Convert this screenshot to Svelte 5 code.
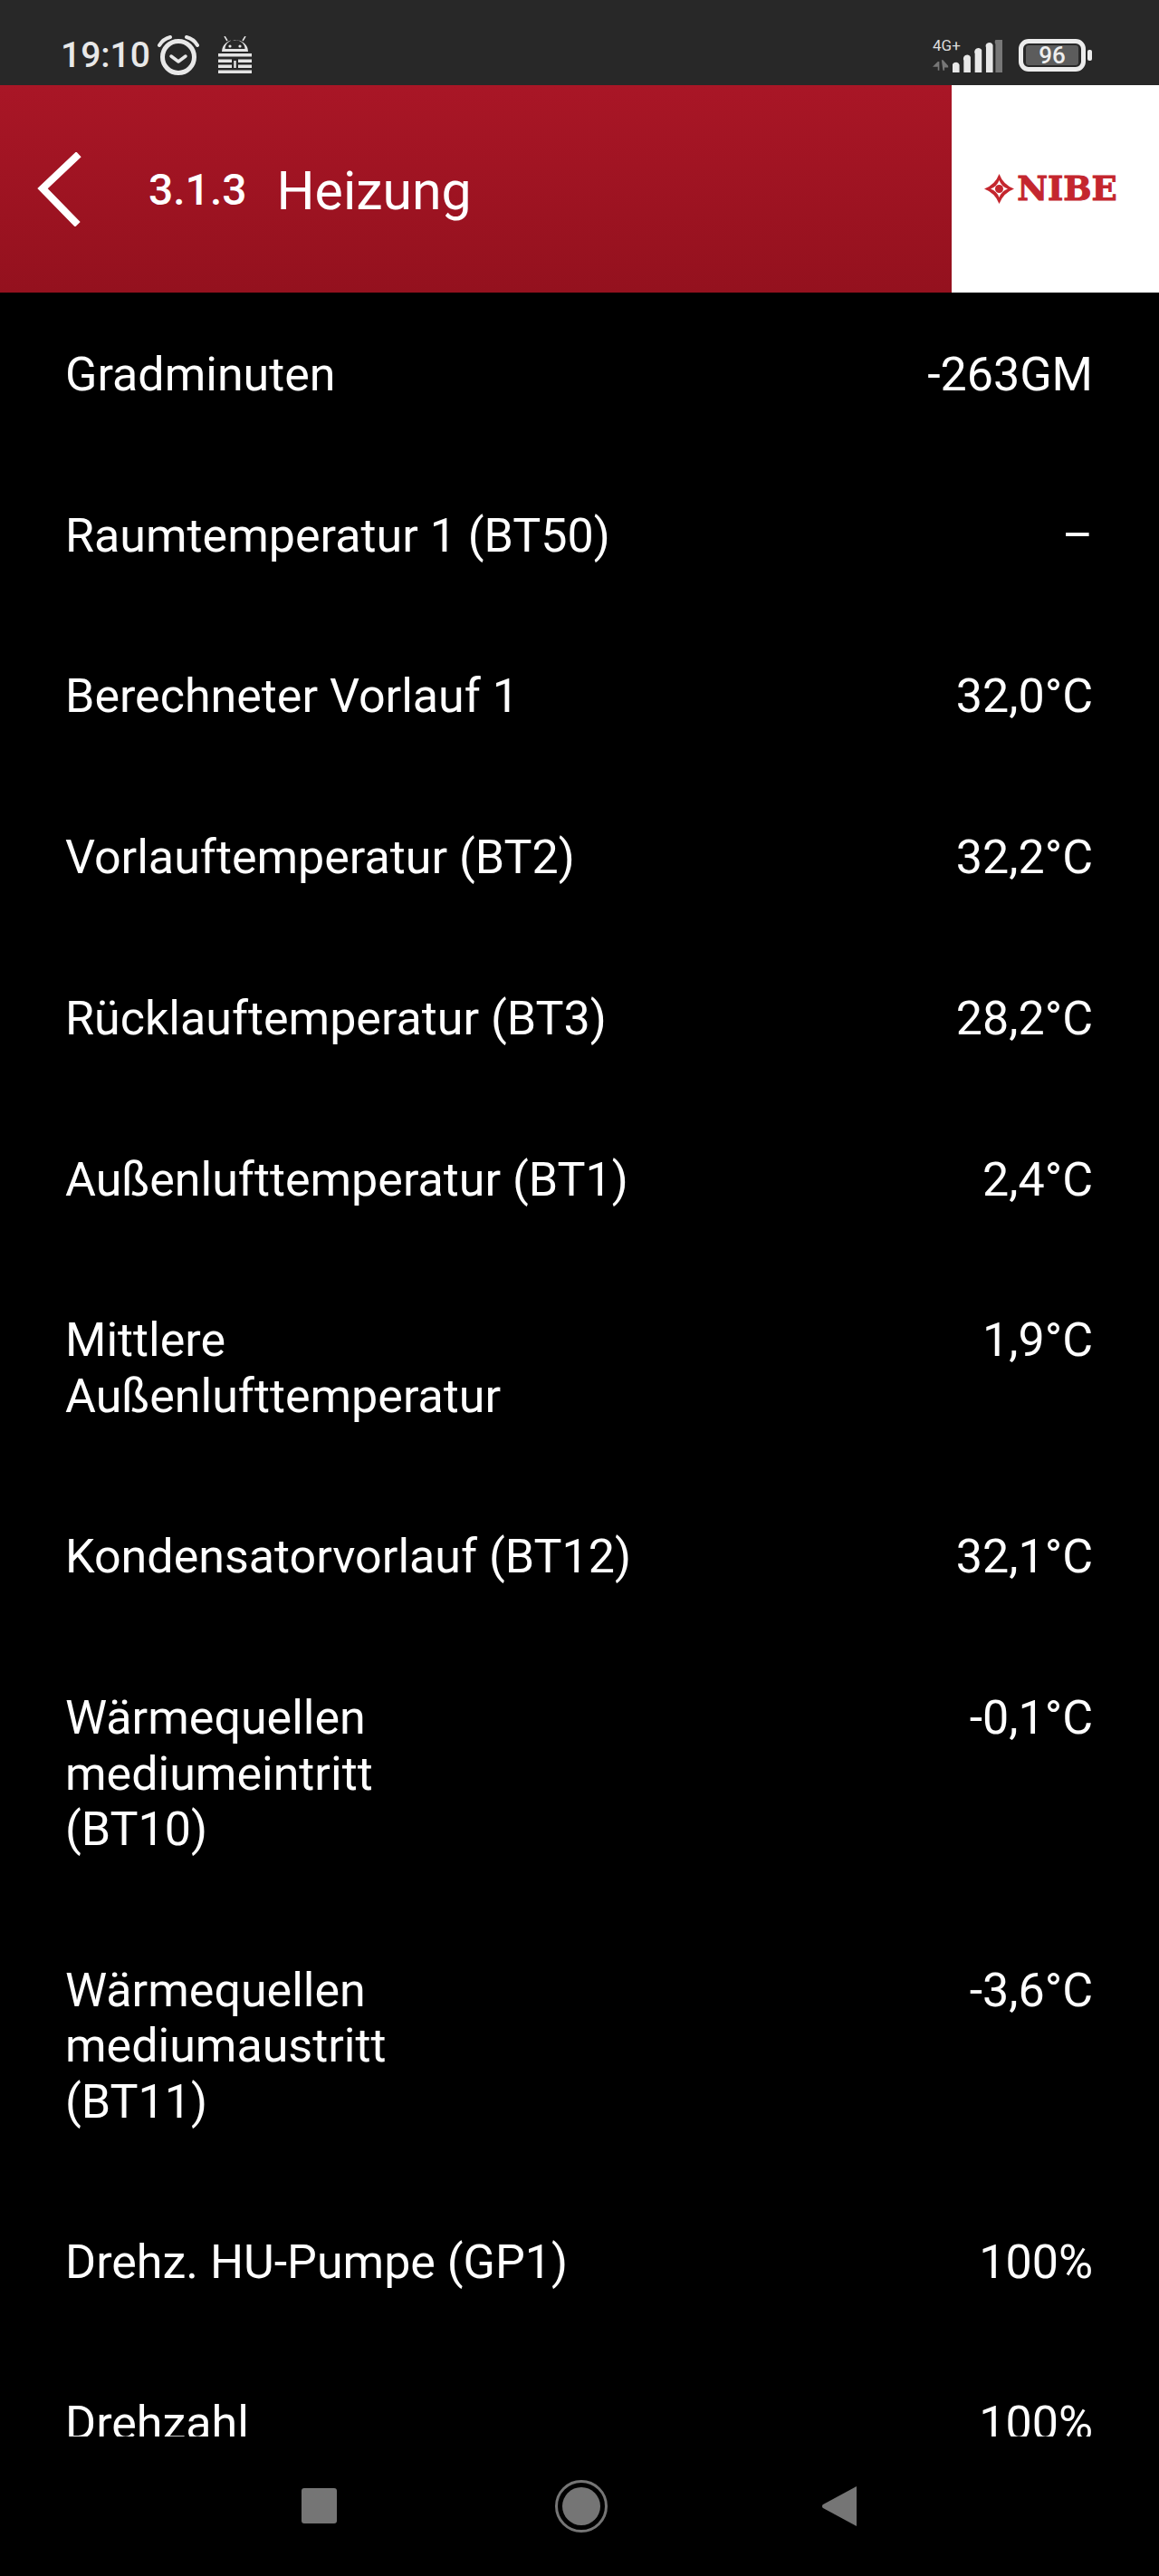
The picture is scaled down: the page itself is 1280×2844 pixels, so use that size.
<script>
	const rows = [
		{ label: 'Gradminuten', value: '-263GM' },
		{ label: 'Raumtemperatur 1 (BT50)', value: '–' },
		{ label: 'Berechneter Vorlauf 1', value: '32,0°C' },
		{ label: 'Vorlauftemperatur (BT2)', value: '32,2°C' },
		{ label: 'Rücklauftemperatur (BT3)', value: '28,2°C' },
		{ label: 'Außenlufttemperatur (BT1)', value: '2,4°C' },
		{ label: 'Mittlere\nAußenlufttemperatur', value: '1,9°C' },
		{ label: 'Kondensatorvorlauf (BT12)', value: '32,1°C' },
		{ label: 'Wärmequellen\nmediumeintritt\n(BT10)', value: '-0,1°C' },
		{ label: 'Wärmequellen\nmediumaustritt\n(BT11)', value: '-3,6°C' },
		{ label: 'Drehz. HU-Pumpe (GP1)', value: '100%' },
		{ label: 'Drehzahl', value: '100%' }
	];
</script>

<div class="screen">
	<div class="statusbar">
		<div class="status-left">
			<span class="time">19:10</span>
			<svg class="alarm" width="48" height="44" viewBox="0 0 48 44" fill="none" stroke="#e8e8e8">
				<circle cx="24" cy="24" r="17.5" stroke-width="5" />
				<path d="M16 23l8 6 8-6" stroke-width="3.5" stroke-linecap="round" stroke-linejoin="round" />
				<path d="M3 11Q7 4 15 2M45 11Q41 4 33 2" stroke-width="4" stroke-linecap="round" />
			</svg>
			<svg class="droid" width="37" height="42" viewBox="0 0 37 42" fill="#e4e4e4">
				<path d="M4 17a14.500 13 0 0 1 29 0zM7.500 14a11 10 0 0 1 22 0z" fill-rule="evenodd" />
				<path d="M10 5L7 0M27 5l3-5" stroke="#e4e4e4" stroke-width="1.5" />
				<circle cx="13" cy="11" r="1.6" />
				<circle cx="24" cy="11" r="1.6" />
				<rect x="0" y="19" width="37" height="3.500" />
				<rect x="0" y="25.500" width="15" height="3.500" />
				<rect x="22" y="25.500" width="15" height="3.500" />
				<rect x="0" y="31.500" width="15" height="3.500" />
				<rect x="22" y="31.500" width="15" height="3.500" />
				<rect x="0" y="37.500" width="37" height="3.500" />
				<rect x="17.250" y="27" width="2.500" height="8" />
			</svg>
		</div>
		<div class="status-right">
			<div class="net">
				<span class="net-label">4G+</span>
				<svg width="18" height="16" viewBox="0 0 22 16" fill="#777">
					<path d="M0 10L7 3h2v12H7v-5zM12 1h2l7 8v2h-5v4h-2z" />
				</svg>
			</div>
			<svg class="signal" width="55" height="36" viewBox="0 0 58 38" preserveAspectRatio="none">
				<path d="M0 38v-6a4 4 0 0 1 8-3v9z" fill="#e8e8e8" />
				<path d="M13 38V24a4 4 0 0 1 8-4v18z" fill="#e8e8e8" />
				<path d="M26 38V16a4 4 0 0 1 8-4v26z" fill="#e8e8e8" />
				<path d="M39 38V9a4 4 0 0 1 8-3v32z" fill="#e8e8e8" />
				<path d="M50 38V5a4 4 0 0 1 8-5v38z" fill="#777" />
			</svg>
			<div class="battery">
				<div class="battery-body"><span class="battery-fill">96</span></div>
				<div class="battery-cap"></div>
			</div>
		</div>
	</div>

	<header class="appbar">
		<svg class="back" width="50" height="82" viewBox="0 0 50 82" fill="none" stroke="#fff" stroke-width="8" stroke-linecap="square">
			<path d="M43 5L6 40l36 37" />
		</svg>
		<span class="num">3.1.3</span>
		<span class="title">Heizung</span>
		<div class="logo">
			<svg width="33" height="33" viewBox="0 0 33 33" fill="#c4262e">
				<circle cx="16.500" cy="16.500" r="4.500" />
				<path fill-rule="evenodd" d="M16.500 0Q21 12 33 16.500Q21 21 16.500 33Q12 21 0 16.500Q12 12 16.500 0zM16.500 7Q19 14 26 16.500Q19 19 16.500 26Q14 19 7 16.500Q14 14 16.500 7z" />
			</svg>
			<span class="logo-text">NIBE</span>
		</div>
	</header>

	<main class="list">
		{#each rows as row}
			<div class="row">
				<span class="label">{row.label}</span>
				<span class="value">{row.value}</span>
			</div>
		{/each}
	</main>

	<nav class="navbar">
		<div class="nav-square"></div>
		<div class="nav-home"><div class="nav-dot"></div></div>
		<svg width="38" height="44" viewBox="0 0 38 44" fill="#757575">
			<path d="M38 0v44L1 24a2.500 2.500 0 0 1 0-4z" />
		</svg>
	</nav>
</div>

<style>
	:global(body) {
		background: #000;
	}

	.screen {
		display: flex;
		flex-direction: column;
		height: 2844px;
		background: #000;
		font-family: Roboto, sans-serif;
		color: #fff;
		overflow: hidden;
	}

	.statusbar {
		display: flex;
		justify-content: space-between;
		align-items: center;
		height: 94px;
		padding: 28px 74px 0 67px;
		box-sizing: border-box;
		background: #282828;
		flex-shrink: 0;
	}

	.status-left,
	.status-right {
		display: flex;
		align-items: center;
	}

	.time {
		font-size: 39px;
		font-weight: 500;
		color: #e8e8e8;
	}

	.alarm {
		margin-left: 7px;
	}

	.droid {
		margin-left: 20px;
	}

	.net {
		display: flex;
		flex-direction: column;
		gap: 6px;
		width: 20px;
	}

	.net-label {
		font-size: 17px;
		line-height: 16px;
		color: #ddd;
		white-space: nowrap;
	}

	.signal {
		margin-left: 2px;
		margin-top: 2px;
	}

	.battery {
		display: flex;
		align-items: center;
		margin-left: 18px;
		gap: 2px;
	}

	.battery-body {
		border: 5px solid #ececec;
		border-radius: 11px;
		height: 22px;
		width: 58px;
		padding: 2px 3px;
	}

	.battery-fill {
		display: block;
		height: 100%;
		background: #5c5c5c;
		border-radius: 3px;
		font-size: 26px;
		line-height: 23px;
		font-weight: 500;
		text-align: center;
		color: #eee;
	}

	.battery-cap {
		width: 5px;
		height: 12px;
		background: #ececec;
		border-radius: 2px;
	}

	.appbar {
		display: flex;
		align-items: center;
		height: 229px;
		padding-left: 41px;
		flex-shrink: 0;
		background: linear-gradient(#a91626, #94111e);
		box-sizing: border-box;
	}

	.back {
		flex-shrink: 0;
	}

	.num {
		margin-left: 73px;
		padding-top: 2px;
		font-size: 48px;
		font-weight: 500;
	}

	.title {
		margin-left: 33px;
		padding-top: 3px;
		font-size: 59px;
		flex: 1;
	}

	.logo {
		display: flex;
		align-items: center;
		gap: 3px;
		justify-content: center;
		width: 229px;
		height: 100%;
		background: #fff;
		flex-shrink: 0;
		box-sizing: border-box;
		padding-right: 10px;
	}

	.logo-text {
		font-family: 'DejaVu Serif', serif;
		font-weight: 700;
		font-size: 37px;
		line-height: 1;
		color: #c4262e;
		-webkit-text-stroke: 1px #c4262e;
	}

	.list {
		flex: 1;
		min-height: 0;
		padding-top: 2px;
		overflow: hidden;
	}

	.row {
		display: flex;
		justify-content: space-between;
		padding: 58.1px 73px 58.1px 72px;
		font-size: 52px;
		line-height: 61.5px;
	}

	.label {
		white-space: pre-line;
	}

	.navbar {
		display: flex;
		align-items: center;
		justify-content: center;
		height: 154px;
		flex-shrink: 0;
		padding-bottom: 1px;
		padding-right: 2px;
		box-sizing: border-box;
		background: #000;
	}

	.nav-square {
		width: 39px;
		height: 39px;
		background: #757575;
		border-radius: 3px;
	}

	.nav-home {
		display: flex;
		align-items: center;
		justify-content: center;
		width: 58px;
		height: 58px;
		margin: 0 237px 0 241px;
		box-sizing: border-box;
		border: 3px solid #757575;
		border-radius: 50%;
	}

	.nav-dot {
		width: 42px;
		height: 42px;
		background: #757575;
		border-radius: 50%;
	}
</style>
